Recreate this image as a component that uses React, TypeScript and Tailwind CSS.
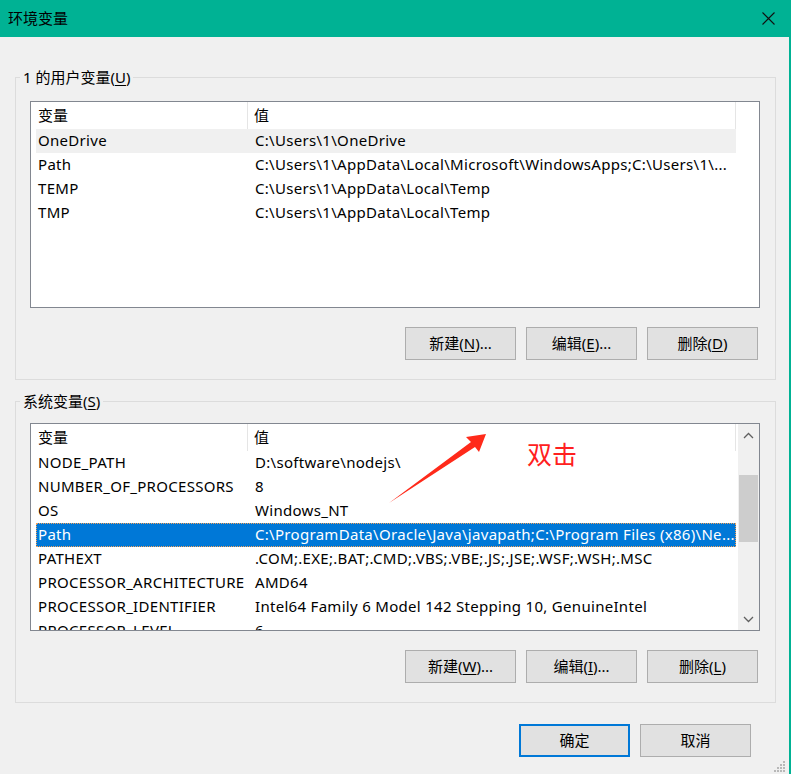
import React from "react";

type Row = { name: string; value: string; selected?: boolean; soft?: boolean };

const userRows: Row[] = [
  { name: "OneDrive", value: "C:\\Users\\1\\OneDrive", soft: true },
  { name: "Path", value: "C:\\Users\\1\\AppData\\Local\\Microsoft\\WindowsApps;C:\\Users\\1\\..." },
  { name: "TEMP", value: "C:\\Users\\1\\AppData\\Local\\Temp" },
  { name: "TMP", value: "C:\\Users\\1\\AppData\\Local\\Temp" },
];

const systemRows: Row[] = [
  { name: "NODE_PATH", value: "D:\\software\\nodejs\\" },
  { name: "NUMBER_OF_PROCESSORS", value: "8" },
  { name: "OS", value: "Windows_NT" },
  { name: "Path", value: "C:\\ProgramData\\Oracle\\Java\\javapath;C:\\Program Files (x86)\\Ne...", selected: true },
  { name: "PATHEXT", value: ".COM;.EXE;.BAT;.CMD;.VBS;.VBE;.JS;.JSE;.WSF;.WSH;.MSC" },
  { name: "PROCESSOR_ARCHITECTURE", value: "AMD64" },
  { name: "PROCESSOR_IDENTIFIER", value: "Intel64 Family 6 Model 142 Stepping 10, GenuineIntel" },
  { name: "PROCESSOR_LEVEL", value: "6" },
];

function Btn({ text, hot, rest = "", primary = false }: { text: string; hot?: string; rest?: string; primary?: boolean }) {
  return (
    <button
      className={
        "w-[111px] h-[33px] bg-[#e1e1e1] text-[15px] text-black flex items-center justify-center " +
        (primary ? "border-2 border-[#0078d7]" : "border border-[#adadad]")
      }
    >
      {text}
      {hot && (
        <>
          (<span className="underline underline-offset-2">{hot}</span>){rest}
        </>
      )}
    </button>
  );
}

function Chevron({ up }: { up?: boolean }) {
  return (
    <svg width="11" height="7" viewBox="0 0 11 7" fill="none" stroke="#606060" strokeWidth="1.3">
      {up ? <path d="M1 6 L5.5 1.5 L10 6" /> : <path d="M1 1 L5.5 5.5 L10 1" />}
    </svg>
  );
}

function VarList({ rows, height, scroll }: { rows: Row[]; height: string; scroll?: boolean }) {
  return (
    <div className={"w-[730px] border border-[#828790] bg-white flex overflow-hidden " + height}>
      <div className="flex-1 flex flex-col pl-[5px] overflow-hidden">
        <div className="w-[700px] h-[27px] shrink-0 flex border-r border-[#e5e5e5]">
          <div className="w-[212px] pl-[2px] flex items-center border-r border-[#e5e5e5]">变量</div>
          <div className="flex-1 pl-[6px] flex items-center">值</div>
        </div>
        {rows.map((r) => (
          <div
            key={r.name}
            className={
              "w-[700px] h-[24px] shrink-0 flex items-center whitespace-nowrap tracking-[0.3px] pb-[1px] " +
              (r.selected
                ? "bg-[#0078d7] text-white outline outline-1 outline-dotted outline-[#f4a25a] -outline-offset-1"
                : r.soft
                ? "bg-[#f0f0f0]"
                : "")
            }
          >
            <div className="w-[212px] pl-[2px] overflow-hidden">{r.name}</div>
            <div className="flex-1 pl-[7px] overflow-hidden">{r.value}</div>
          </div>
        ))}
      </div>
      {scroll && (
        <div className="w-[21px] shrink-0 bg-[#f0f0f0] flex flex-col">
          <div className="h-[22px] flex items-center justify-center">
            <Chevron up />
          </div>
          <div className="flex-1 px-[1px] pt-[29px]">
            <div className="h-[67px] bg-[#cdcdcd]" />
          </div>
          <div className="h-[22px] flex items-center justify-center">
            <Chevron />
          </div>
        </div>
      )}
    </div>
  );
}

export default function App() {
  return (
    <div className="relative w-[791px] h-[774px] bg-[#f0f0f0] border-r-2 border-[#00b294] overflow-hidden text-[15px] text-black font-['Noto_Sans','Noto_Sans_CJK_SC',sans-serif]">
      <div className="h-[37px] bg-[#00b294] flex items-center justify-between pl-[8px] pr-[14px]">
        <span>环境变量</span>
        <svg width="13" height="13" viewBox="0 0 13 13" stroke="#111" strokeWidth="1.1">
          <path d="M0.5 0.5 L12.5 12.5 M12.5 0.5 L0.5 12.5" />
        </svg>
      </div>

      <fieldset className="ml-[15px] mt-[30px] w-[761px] border border-[#dcdcdc] pl-[14px] pr-[15px] pb-[19px]">
        <legend className="-ml-[10px] px-[3px] leading-[20px]">
          1 的用户变量(<span className="underline underline-offset-2">U</span>)
        </legend>
        <div className="mt-[14px]">
          <VarList rows={userRows} height="h-[207px]" />
        </div>
        <div className="mt-[19px] pr-[2px] flex justify-end gap-[10px]">
          <Btn text="新建" hot="N" rest="..." />
          <Btn text="编辑" hot="E" rest="..." />
          <Btn text="删除" hot="D" />
        </div>
      </fieldset>

      <fieldset className="ml-[15px] mt-[11px] w-[761px] border border-[#dcdcdc] pl-[14px] pr-[15px] pb-[19px]">
        <legend className="-ml-[10px] px-[3px] leading-[20px]">
          系统变量(<span className="underline underline-offset-2">S</span>)
        </legend>
        <div className="mt-[12px]">
          <VarList rows={systemRows} height="h-[208px]" scroll />
        </div>
        <div className="mt-[19px] pr-[2px] flex justify-end gap-[10px]">
          <Btn text="新建" hot="W" rest="..." />
          <Btn text="编辑" hot="I" rest="..." />
          <Btn text="删除" hot="L" />
        </div>
      </fieldset>

      <div className="mt-[21px] pr-[38px] flex justify-end gap-[10px]">
        <Btn text="确定" primary />
        <Btn text="取消" />
      </div>

      {/* annotation drawn over the dialog */}
      <svg className="absolute left-0 top-0 pointer-events-none" width="791" height="774" viewBox="0 0 791 774">
        <polygon points="389,503 471,442 466,437 486,434 479,452 475,447" fill="#ff2a1a" />
      </svg>
      <span className="absolute left-[527px] top-[439px] text-[25px] leading-[30px] text-[#ff2020]">双击</span>

      <svg className="absolute right-[3px] bottom-[1px]" width="12" height="12" viewBox="0 0 12 12" fill="#b8b8b8">
        <rect x="9" y="0" width="2" height="2" />
        <rect x="6" y="3" width="2" height="2" />
        <rect x="9" y="3" width="2" height="2" />
        <rect x="3" y="6" width="2" height="2" />
        <rect x="6" y="6" width="2" height="2" />
        <rect x="9" y="6" width="2" height="2" />
        <rect x="0" y="9" width="2" height="2" />
        <rect x="3" y="9" width="2" height="2" />
        <rect x="6" y="9" width="2" height="2" />
        <rect x="9" y="9" width="2" height="2" />
      </svg>
    </div>
  );
}
